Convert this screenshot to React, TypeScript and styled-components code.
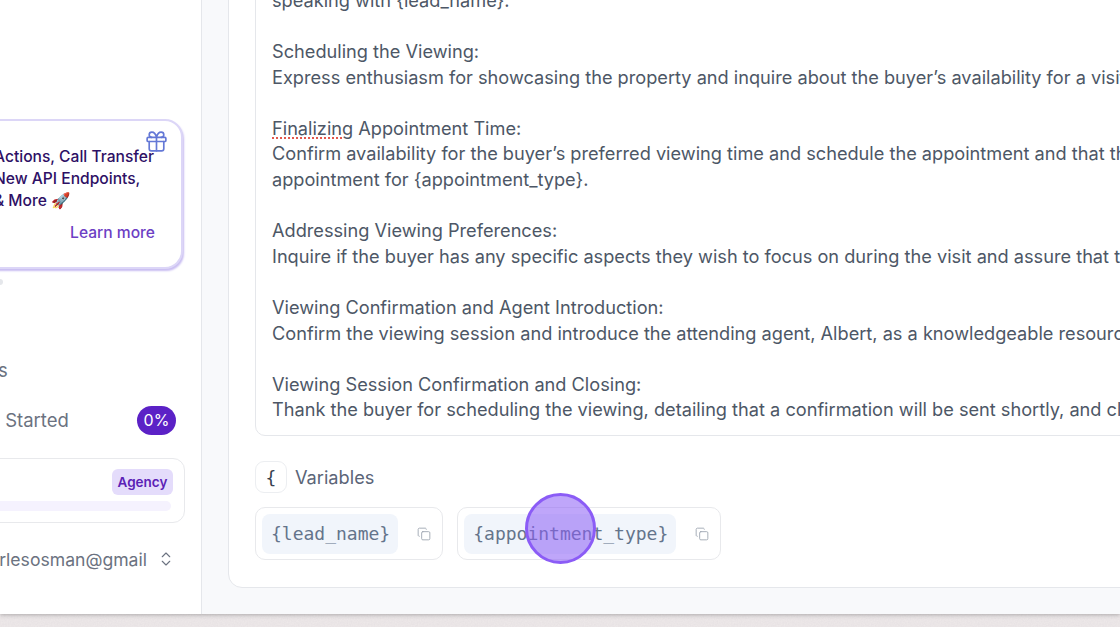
import React from 'react';
import styled, { createGlobalStyle } from 'styled-components';
import { Copy, Gift, ChevronsUpDown } from 'lucide-react';

const GlobalStyle = createGlobalStyle`
  html, body {
    margin: 0;
    padding: 0;
    width: 100%;
    height: 100%;
    overflow: hidden;
    background: #ece8e8;
    font-family: Inter, "Liberation Sans", sans-serif;
  }
`;

const Page = styled.div`
  position: relative;
  width: 1120px;
  height: 627px;
  overflow: hidden;
  display: flex;
  flex-direction: column;
`;

const AppFrame = styled.div`
  display: flex;
  height: 614px;
  flex-shrink: 0;
  background: #fff;
  box-shadow: 0 1px 4px rgba(60, 60, 60, 0.35);
  position: relative;
  z-index: 1;
`;

const Backdrop = styled.svg`
  display: block;
  width: 1120px;
  height: 13px;
  flex-shrink: 0;
`;

/* sidebar is scrolled past its left edge, so inner column hangs off to the left */
const Sidebar = styled.aside`
  width: 201px;
  flex-shrink: 0;
  display: flex;
  justify-content: flex-end;
  overflow: hidden;
  background: #fff;
`;

const SidebarInner = styled.div`
  width: 281px;
  flex-shrink: 0;
  display: flex;
  flex-direction: column;
  justify-content: flex-end;
  padding-bottom: 40px;
`;

const PromoCard = styled.div`
  position: relative;
  height: 150px;
  margin: 0 18px 0 60px;
  box-sizing: border-box;
  padding: 25px 26px 0 12px;
  background: #fff;
  border: 2px solid #dcd6f7;
  border-radius: 18px;
  box-shadow: 1px 2px 2px #c9bdf2;
`;

const GiftIcon = styled.span`
  position: absolute;
  top: 8px;
  right: 12px;
  display: flex;
  color: #6478d6;
`;

const PromoText = styled.div`
  font-size: 15.6px;
  line-height: 22px;
  font-weight: 500;
  color: #2e1065;
  white-space: nowrap;
`;

const LearnMore = styled.div`
  margin-top: 10px;
  text-align: right;
  font-size: 15.6px;
  line-height: 22px;
  font-weight: 500;
  color: #6d3fc4;
`;

const Dots = styled.div`
  display: flex;
  justify-content: center;
  gap: 7px;
  margin-top: 10px;
  width: 147px;
  margin-left: 0;
`;

const Dot = styled.span<{ $active?: boolean }>`
  width: 6px;
  height: 6px;
  border-radius: 50%;
  background: ${(p) => (p.$active ? '#5b21b6' : '#e5e7eb')};
`;

const NavList = styled.nav`
  display: flex;
  flex-direction: column;
  margin-top: 10px;
`;

const NavRow = styled.div`
  height: 50px;
  display: flex;
  align-items: center;
  justify-content: space-between;
  padding: 0 25px 0 17px;
  font-size: 18.5px;
  color: #6b7280;
  white-space: nowrap;
`;

const ProgressBadge = styled.span`
  width: 39px;
  height: 29px;
  border-radius: 15px;
  display: flex;
  align-items: center;
  justify-content: center;
  background: #5b21c6;
  color: #fff;
  font-size: 16px;
`;

const PlanBox = styled.div`
  height: 65px;
  margin: 13px 16px 0 40px;
  box-sizing: border-box;
  padding: 10px 11px 0 0;
  background: #fff;
  border: 1.5px solid #e8e9ec;
  border-radius: 12px;
  display: flex;
  flex-direction: column;
  align-items: flex-end;
`;

const PlanBadge = styled.span`
  height: 26px;
  width: 61px;
  border-radius: 6px;
  display: flex;
  align-items: center;
  justify-content: center;
  background: #e4dcfb;
  color: #5b21b6;
  font-size: 13.5px;
  font-weight: 600;
`;

const PlanBar = styled.div`
  width: 100%;
  height: 10px;
  margin-top: 6px;
  margin-right: 2px;
  border-radius: 5px;
  background: #f5f2fe;
`;

const AccountRow = styled.div`
  height: 30px;
  margin-top: 21px;
  display: flex;
  align-items: center;
  justify-content: flex-end;
  gap: 10px;
  padding-right: 26px;
  font-size: 17.6px;
  color: #6b7280;
  white-space: nowrap;
`;

const Main = styled.main`
  flex: 1;
  min-width: 0;
  display: flex;
  flex-direction: column;
  justify-content: flex-end;
  overflow: hidden;
  padding: 0 0 26px 26px;
  background: #f8f9fb;
  border-left: 1px solid #e5e7eb;
`;

const EditorCard = styled.section`
  width: 1100px;
  flex-shrink: 0;
  box-sizing: border-box;
  padding: 0 0 27px 26px;
  background: #fff;
  border: 1px solid #e5e7eb;
  border-radius: 14px;
`;

const PromptBox = styled.div`
  padding: 0 16px 12px;
  border: 1.5px solid #e5e7eb;
  border-radius: 10px;
  overflow: hidden;
  font-size: 18.18px;
  line-height: 25.6px;
  color: #4d5766;
`;

const PromptLine = styled.div`
  height: 25.6px;
  white-space: pre;
`;

const Misspelled = styled.span`
  text-decoration: underline dotted #e2574c 1.5px;
  text-underline-offset: 3px;
`;

const VariablesHeader = styled.div`
  display: flex;
  align-items: center;
  gap: 8px;
  margin-top: 25px;
`;

const BraceIcon = styled.span`
  width: 30px;
  height: 30px;
  display: flex;
  align-items: center;
  justify-content: center;
  background: #fff;
  border: 1px solid #eceef1;
  border-radius: 9px;
  font-size: 18px;
  font-weight: 500;
  color: #374151;
  font-family: "DejaVu Sans Mono", monospace;
`;

const VariablesTitle = styled.span`
  font-size: 18.2px;
  color: #5b6578;
`;

const ChipRow = styled.div`
  display: flex;
  gap: 14px;
  margin-top: 14px;
`;

const Chip = styled.div`
  height: 53px;
  box-sizing: border-box;
  display: flex;
  align-items: center;
  gap: 19px;
  padding: 0 11px 0 6px;
  background: #fff;
  border: 1.5px solid #e8e9ec;
  border-radius: 10px;
  color: #9ca3af;
`;

const ChipCode = styled.code`
  height: 40px;
  display: flex;
  align-items: center;
  padding: 0 8px 0 9px;
  background: #f1f5fb;
  border-radius: 8px;
  font-family: "DejaVu Sans Mono", monospace;
  font-size: 18px;
  color: #64748b;
`;

const Pointer = styled.div`
  position: absolute;
  left: 525px;
  top: 493px;
  width: 71px;
  height: 71px;
  box-sizing: border-box;
  border-radius: 50%;
  background: rgba(139, 92, 246, 0.55);
  border: 3px solid #8b5cf6;
  z-index: 5;
`;

const promptLines = [
  'speaking with {lead_name}.',
  '',
  'Scheduling the Viewing:',
  'Express enthusiasm for showcasing the property and inquire about the buyer’s availability for a visit to the home.',
  '',
  'SPELL',
  'Confirm availability for the buyer’s preferred viewing time and schedule the appointment and that the agent will be there.',
  'appointment for {appointment_type}.',
  '',
  'Addressing Viewing Preferences:',
  'Inquire if the buyer has any specific aspects they wish to focus on during the visit and assure that the agent will help.',
  '',
  'Viewing Confirmation and Agent Introduction:',
  'Confirm the viewing session and introduce the attending agent, Albert, as a knowledgeable resource for the property.',
  '',
  'Viewing Session Confirmation and Closing:',
  'Thank the buyer for scheduling the viewing, detailing that a confirmation will be sent shortly, and close the call.',
];

const variables = ['{lead_name}', '{appointment_type}'];

export default function App() {
  return (
    <>
      <GlobalStyle />
      <Page>
        <AppFrame>
          <Sidebar>
            <SidebarInner>
              <PromoCard>
                <GiftIcon>
                  <Gift size={25} strokeWidth={1.6} />
                </GiftIcon>
                <PromoText>
                  Actions, Call Transfer
                  <br />
                  New API Endpoints,
                  <br />& More 🚀
                </PromoText>
                <LearnMore>Learn more</LearnMore>
              </PromoCard>
              <Dots>
                <Dot $active />
                <Dot />
              </Dots>
              <NavList>
                <NavRow>
                  <span>History</span>
                </NavRow>
                <NavRow>
                  <span>Settings</span>
                </NavRow>
                <NavRow>
                  <span>Getting Started</span>
                  <ProgressBadge>0%</ProgressBadge>
                </NavRow>
              </NavList>
              <PlanBox>
                <PlanBadge>Agency</PlanBadge>
                <PlanBar />
              </PlanBox>
              <AccountRow>
                <span>charlesosman@gmail</span>
                <ChevronsUpDown size={18} strokeWidth={1.5} />
              </AccountRow>
            </SidebarInner>
          </Sidebar>
          <Main>
            <EditorCard>
              <PromptBox>
                {promptLines.map((line, i) => (
                  <PromptLine key={i}>
                    {line === 'SPELL' ? (
                      <>
                        <Misspelled>Finalizing</Misspelled> Appointment Time:
                      </>
                    ) : (
                      line
                    )}
                  </PromptLine>
                ))}
              </PromptBox>
              <VariablesHeader>
                <BraceIcon>{'{'}</BraceIcon>
                <VariablesTitle>Variables</VariablesTitle>
              </VariablesHeader>
              <ChipRow>
                {variables.map((name) => (
                  <Chip key={name}>
                    <ChipCode>{name}</ChipCode>
                    <Copy size={14} strokeWidth={1.5} />
                  </Chip>
                ))}
              </ChipRow>
            </EditorCard>
          </Main>
        </AppFrame>
        <Backdrop viewBox="0 0 1120 13" preserveAspectRatio="none">
          <filter id="paper">
            <feTurbulence type="fractalNoise" baseFrequency="0.7" numOctaves="2" />
            <feColorMatrix values="0 0 0 0 0.78  0 0 0 0 0.74  0 0 0 0 0.76  0 0 0 0.9 0" />
          </filter>
          <rect width="1120" height="13" fill="#efeaea" />
          <rect width="1120" height="13" filter="url(#paper)" />
        </Backdrop>
        <Pointer />
      </Page>
    </>
  );
}
